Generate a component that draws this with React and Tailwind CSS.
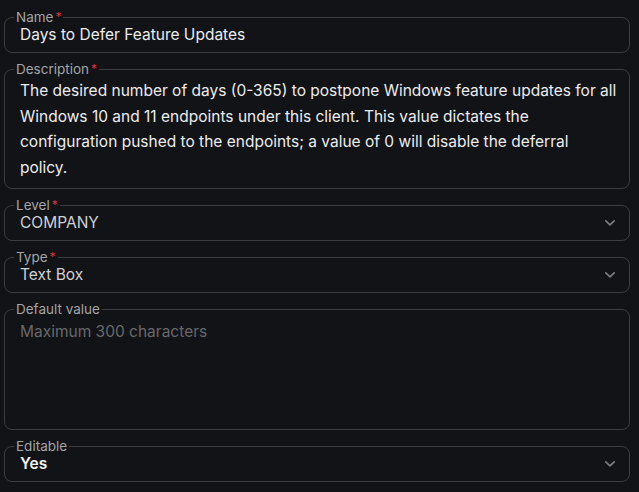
import React from "react";

function Chevron() {
  return (
    <svg width="12" height="8" viewBox="0 0 12 8" fill="none" className="shrink-0">
      <path d="M1.8 1.8 L6 5.8 L10.2 1.8" stroke="#7d7e82" strokeWidth="1.6" strokeLinecap="round" strokeLinejoin="round" />
    </svg>
  );
}

function Field({ label, required, children }) {
  return (
    <fieldset className="m-0 min-w-0 rounded-[8px] border border-[#3b3d41] px-[9px] pb-[6px] pt-0">
      <legend className="px-[2px] text-[13.5px] leading-[14px] text-[#a3a4a7]">
        {label}
        {required && <span className="ml-[2px] align-top text-[12px] text-[#d9333f]">*</span>}
      </legend>
      {children}
    </fieldset>
  );
}

export default function App() {
  return (
    <div
      className="min-h-[492px] w-full bg-[#121316] pl-[4px] pr-[9px] pt-[10px] pb-[10px]"
      style={{ fontFamily: "Inter, 'Noto Sans', sans-serif" }}
    >
      <div className="flex flex-col gap-[9px]">
        <Field label="Name" required>
          <div className="pl-[6px] text-[15.5px] leading-[22px] text-[#ececed]">
            Days to Defer Feature Updates
          </div>
        </Field>

        <Field label="Description" required>
          <div className="pl-[6px] pr-0 pt-[2px] pb-[2px] text-[15.5px] leading-[25.5px] text-[#ececed]">
            The desired number of days (0-365) to postpone Windows feature updates for all Windows 10 and 11
            endpoints under this client. This value dictates the configuration pushed to the endpoints; a value of 0
            will disable the deferral policy.
          </div>
        </Field>

        <Field label="Level" required>
          <div className="flex items-center justify-between pl-[6px] pr-[4px]">
            <span className="text-[15.5px] leading-[22px] text-[#cfd0d2]">COMPANY</span>
            <Chevron />
          </div>
        </Field>

        <Field label="Type" required>
          <div className="flex items-center justify-between pl-[6px] pr-[4px]">
            <span className="text-[15.5px] leading-[22px] text-[#cfd0d2]">Text Box</span>
            <Chevron />
          </div>
        </Field>

        <Field label="Default value">
          <div className="h-[107px] pl-[6px] pt-[5px] text-[15.5px] leading-[22px] text-[#67686b]">
            Maximum 300 characters
          </div>
        </Field>

        <Field label="Editable">
          <div className="flex items-center justify-between pl-[6px] pr-[4px]">
            <span className="text-[15.5px] font-semibold leading-[22px] text-[#f2f2f3]">Yes</span>
            <Chevron />
          </div>
        </Field>
      </div>
    </div>
  );
}
